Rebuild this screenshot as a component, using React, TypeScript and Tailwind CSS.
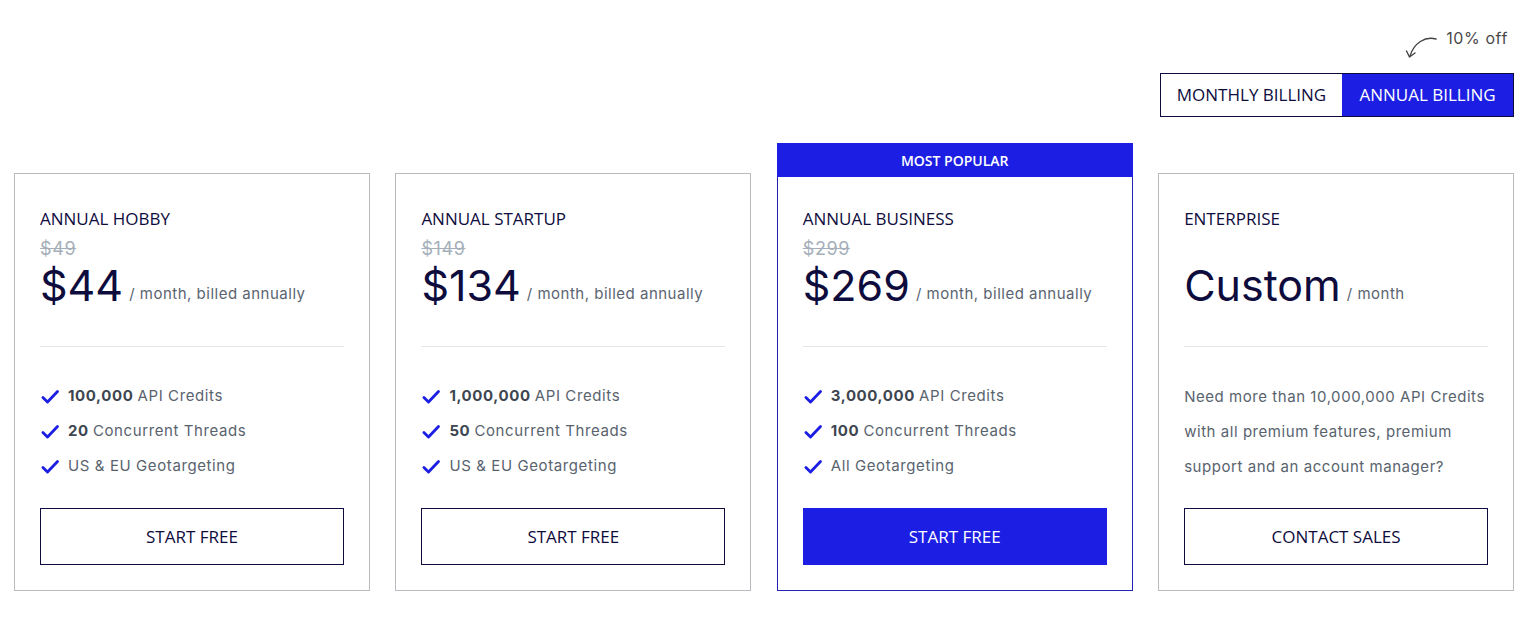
import React from "react";

const BLUE = "bg-[#1c1fe3]";
const body = { fontFamily: "Inter, 'Noto Sans', sans-serif" } as const;
const head = { fontFamily: "'Open Sans', 'Noto Sans', sans-serif" } as const;

function Check() {
  return (
    <svg width="20" height="20" viewBox="0 0 24 24" fill="none" stroke="#1c1fe3" strokeWidth="3.4" strokeLinecap="round" strokeLinejoin="round" className="shrink-0">
      <path d="M3.5 12.5l5.5 5.5L21 5.5" />
    </svg>
  );
}

type Plan = {
  title: string;
  old?: string;
  price: string;
  unit: string;
  features?: { b?: string; t: string }[];
  text?: string;
  cta: string;
  popular?: boolean;
};

const plans: Plan[] = [
  {
    title: "ANNUAL HOBBY",
    old: "$49",
    price: "$44",
    unit: "/ month, billed annually",
    features: [
      { b: "100,000", t: "API Credits" },
      { b: "20", t: "Concurrent Threads" },
      { t: "US & EU Geotargeting" },
    ],
    cta: "START FREE",
  },
  {
    title: "ANNUAL STARTUP",
    old: "$149",
    price: "$134",
    unit: "/ month, billed annually",
    features: [
      { b: "1,000,000", t: "API Credits" },
      { b: "50", t: "Concurrent Threads" },
      { t: "US & EU Geotargeting" },
    ],
    cta: "START FREE",
  },
  {
    title: "ANNUAL BUSINESS",
    old: "$299",
    price: "$269",
    unit: "/ month, billed annually",
    features: [
      { b: "3,000,000", t: "API Credits" },
      { b: "100", t: "Concurrent Threads" },
      { t: "All Geotargeting" },
    ],
    cta: "START FREE",
    popular: true,
  },
  {
    title: "ENTERPRISE",
    price: "Custom",
    unit: "/ month",
    text: "Need more than 10,000,000 API Credits with all premium features, premium support and an account manager?",
    cta: "CONTACT SALES",
  },
];

function Card({ p }: { p: Plan }) {
  return (
    <div
      className={`relative flex flex-col bg-white px-[25px] pt-[31px] pb-[25px] border ${
        p.popular ? "border-[#2224b8]" : "border-[#b8bcc0]"
      }`}
    >
      {p.popular && (
        <div
          className={`absolute -top-[31px] -left-px -right-px h-[34px] ${BLUE} flex items-center justify-center text-white text-[14px] font-semibold`}
          style={head}
        >
          MOST POPULAR
        </div>
      )}
      <div className="h-[28px] leading-[28px] text-[17px] text-[#0e0c3d]" style={head}>
        {p.title}
      </div>
      <div className="mt-[3px] h-[25px] leading-[25px] text-[18px] text-[#a5afb9] line-through tracking-[0.6px]" style={body}>
        {p.old ?? ""}
      </div>
      <div className="flex items-baseline h-[48px]" style={body}>
        <span className="text-[43px] leading-[48px] text-[#0e0c3d]">{p.price}</span>
        <span className="relative bottom-[2px] ml-[6px] text-[15px] text-[#5a6470] tracking-[0.5px]">{p.unit}</span>
      </div>
      <div className="mt-[37px] h-px bg-[#e4e6e9]" />
      <div className="mt-[32px] h-[105px]" style={body}>
        {p.features ? (
          p.features.map((f, i) => (
            <div key={i} className="flex items-center gap-[8px] h-[35px] text-[15px] text-[#59636e] tracking-[0.6px]">
              <Check />
              <span>
                {f.b && <b className="font-bold text-[#3d4650]">{f.b} </b>}
                {f.t}
              </span>
            </div>
          ))
        ) : (
          <p className="text-[15px] leading-[35px] text-[#59636e] tracking-[0.55px]">{p.text}</p>
        )}
      </div>
      <button
        className={`mt-[24px] h-[57px] w-full text-[17px] ${
          p.popular ? `${BLUE} text-white` : "border border-[#0e0c3d] text-[#0e0c3d] bg-white"
        }`}
        style={head}
      >
        {p.cta}
      </button>
    </div>
  );
}

export default function App() {
  return (
    <div className="bg-white w-[1532px] h-[628px] pl-[14px] pr-[18px] pt-[25px]">
      <div className="flex flex-col items-end">
        <div className="flex items-start gap-[7px] mr-[6px]">
          <svg width="34" height="36" viewBox="0 0 34 36" fill="none" stroke="#444" strokeWidth="1.4" strokeLinecap="round" strokeLinejoin="round">
            <path d="M31 14 C20 11 9 18 5 31" />
            <path d="M1.5 26 L4.5 32 L10 28" />
          </svg>
          <span className="text-[16px] leading-[26px] text-[#4a4a4a] tracking-[0.6px]" style={body}>
            10% off
          </span>
        </div>
        <div className="flex mt-[12px] h-[44px] border border-[#0e0c3d]" style={head}>
          <button className="w-[181px] bg-white text-[#0e0c3d] text-[17px]">MONTHLY BILLING</button>
          <button className={`w-[171px] ${BLUE} text-white text-[17px]`}>ANNUAL BILLING</button>
        </div>
      </div>
      <div className="grid grid-cols-4 gap-[25.5px] mt-[56px]">
        {plans.map((p) => (
          <Card key={p.title} p={p} />
        ))}
      </div>
    </div>
  );
}
